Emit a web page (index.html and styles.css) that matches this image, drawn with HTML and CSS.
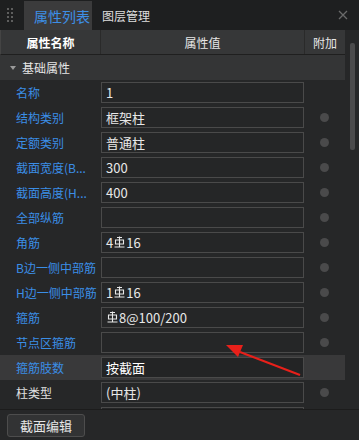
FILE: index.html
```html
<!DOCTYPE html>
<html>
<head>
<meta charset="utf-8">
<link rel="stylesheet" href="styles.css">
</head>
<body>
<div class="panel">
  <div class="topbar">
    <div class="grip"><i></i><i></i><i></i><i></i><i></i><i></i><i></i><i></i></div>
    <div class="tab active">属性列表</div>
    <div class="tab">图层管理</div>
    <div class="spacer"></div>
    <svg class="close" width="10" height="10" viewBox="0 0 10 10"><path d="M1 1L9 9M9 1L1 9" stroke="#6a6a6a" stroke-width="1.3"/></svg>
  </div>
  <div class="main">
    <div class="table">
      <div class="head">
        <div class="hc c1 bold">属性名称</div>
        <div class="hc c2">属性值</div>
        <div class="hc c3">附加</div>
      </div>
      <div class="section"><span class="tri"></span>基础属性</div>
      <div class="row"><div class="lab">名称</div><div class="val"><div class="box">1</div></div><div class="add"></div></div>
      <div class="row"><div class="lab">结构类别</div><div class="val"><div class="box">框架柱</div></div><div class="add"><span class="dot"></span></div></div>
      <div class="row"><div class="lab">定额类别</div><div class="val"><div class="box">普通柱</div></div><div class="add"><span class="dot"></span></div></div>
      <div class="row"><div class="lab">截面宽度(B...</div><div class="val"><div class="box">300</div></div><div class="add"><span class="dot"></span></div></div>
      <div class="row"><div class="lab">截面高度(H...</div><div class="val"><div class="box">400</div></div><div class="add"><span class="dot"></span></div></div>
      <div class="row"><div class="lab">全部纵筋</div><div class="val"><div class="box"></div></div><div class="add"><span class="dot"></span></div></div>
      <div class="row"><div class="lab">角筋</div><div class="val"><div class="box">4<svg class="bar" width="11" height="12" viewBox="0 0 11 12"><path d="M3 1.5H8M5.5 0.5V11M1.5 4H9.5V8H1.5Z M0.5 11H10.5" stroke="#e8e8e8" stroke-width="1.1" fill="none"/></svg>16</div></div><div class="add"><span class="dot"></span></div></div>
      <div class="row"><div class="lab">B边一侧中部筋</div><div class="val"><div class="box"></div></div><div class="add"><span class="dot"></span></div></div>
      <div class="row"><div class="lab">H边一侧中部筋</div><div class="val"><div class="box">1<svg class="bar" width="11" height="12" viewBox="0 0 11 12"><path d="M3 1.5H8M5.5 0.5V11M1.5 4H9.5V8H1.5Z M0.5 11H10.5" stroke="#e8e8e8" stroke-width="1.1" fill="none"/></svg>16</div></div><div class="add"><span class="dot"></span></div></div>
      <div class="row"><div class="lab">箍筋</div><div class="val"><div class="box"><svg class="bar" width="11" height="12" viewBox="0 0 11 12"><path d="M3 1.5H8M5.5 0.5V11M1.5 4H9.5V8H1.5Z M0.5 11H10.5" stroke="#e8e8e8" stroke-width="1.1" fill="none"/></svg>8@100/200</div></div><div class="add"><span class="dot"></span></div></div>
      <div class="row"><div class="lab">节点区箍筋</div><div class="val"><div class="box"></div></div><div class="add"><span class="dot"></span></div></div>
      <div class="row sel"><div class="lab">箍筋肢数</div><div class="val"><div class="box">按截面</div></div><div class="add"></div></div>
      <div class="row"><div class="lab white">柱类型</div><div class="val"><div class="box">(中柱)</div></div><div class="add"><span class="dot"></span></div></div>
      <div class="row"><div class="lab white"></div><div class="val"><div class="box"></div></div><div class="add"><span class="dot"></span></div></div>
    </div>
    <div class="scroll"><div class="thumb"></div></div>
  </div>
  <div class="bottom">
    <div class="btn">截面编辑</div>
  </div>
  <svg class="arrow" width="359" height="440" viewBox="0 0 359 440">
    <path d="M300 375 L240 352" stroke="#e8201a" stroke-width="2" fill="none"/>
    <path d="M226 345 L243 345 L238 357 Z" fill="#e8201a"/>
  </svg>
</div>
</body>
</html>
```
FILE: styles.css
```css
* { box-sizing: border-box; }
html, body { margin: 0; padding: 0; }
body {
  width: 359px; height: 440px; overflow: hidden;
  background: #262728;
  font-family: "Noto Sans CJK SC", "Noto Sans", sans-serif;
  font-size: 12px; color: #e6e6e6;
}
.panel { position: relative; width: 359px; height: 440px; display: flex; flex-direction: column; }
.topbar { height: 30px; background: #1e1f20; display: flex; align-items: stretch; flex: none; }
.grip { width: 24px; display: grid; grid-template-columns: 2px 2px; grid-auto-rows: 2px; column-gap: 2px; row-gap: 2px; padding: 8px 0 0 7px; align-content: start; }
.grip i { background: #5e5e5e; display: block; width: 2px; height: 2px; }
.tab { display: flex; align-items: center; padding: 0 6px 0 10px; color: #dedede; font-size: 12px; }
.tab.active { margin-top: 1px; background: #3b3b3c; color: #3d8fe6; width: 68px; padding: 0 0 0 10px; font-size: 14px; }
.spacer { flex: 1; }
.close { align-self: center; margin-right: 11px; }
.main { flex: 1; display: flex; min-height: 0; overflow: hidden; }
.table { width: 345px; flex: none; }
.head { height: 25px; background: #363738; display: flex; border-left: 1px solid #444; border-bottom: 1px solid #1f1f1f; }
.hc { display: flex; align-items: center; justify-content: center; color: #e6e6e6; }
.bold { font-weight: bold; color: #fff; }
.c1 { width: 100px; border-right: 1px solid #2a2a2a; }
.c2 { width: 204px; border-right: 1px solid #2a2a2a; }
.c3 { flex: 1; }
.section { height: 25px; background: #343536; display: flex; align-items: center; padding-left: 10px; color: #e6e6e6; }
.tri { width: 0; height: 0; border-left: 3px solid transparent; border-right: 3px solid transparent; border-top: 4px solid #9a9a9a; margin-right: 6px; }
.row { height: 25px; display: flex; align-items: center; }
.row.sel { background: #39393a; }
.lab { width: 101px; padding-left: 16px; color: #3b8ee6; white-space: nowrap; overflow: hidden; }
.lab.white { color: #e0e0e0; }
.val { width: 203px; }
.box { height: 21px; border: 1px solid #4a4a4a; background: #252627; display: flex; align-items: center; padding-left: 4px; color: #e8e8e8; font-size: 13px; }
.sel .box { background: #232425; color: #fff; }
.bar { margin: 0 1px 1px; flex: none; }
.add { flex: 1; display: flex; justify-content: center; align-items: center; }
.dot { width: 9px; height: 9px; border-radius: 50%; background: #4a4a4b; }
.scroll { flex: 1; padding: 13px 0 0 5px; }
.thumb { width: 5px; height: 107px; background: #4b4b4c; border-radius: 2px; }
.bottom { height: 31px; flex: none; border-top: 1px solid #1c1c1c; background: #262728; padding: 4px 0 0 7px; }
.btn { width: 78px; height: 23px; border: 1px solid #4d4d4d; border-radius: 3px; background: #323334; display: flex; align-items: center; justify-content: center; color: #e6e6e6; font-size: 13px; }
.arrow { position: absolute; left: 0; top: 0; pointer-events: none; }
```
